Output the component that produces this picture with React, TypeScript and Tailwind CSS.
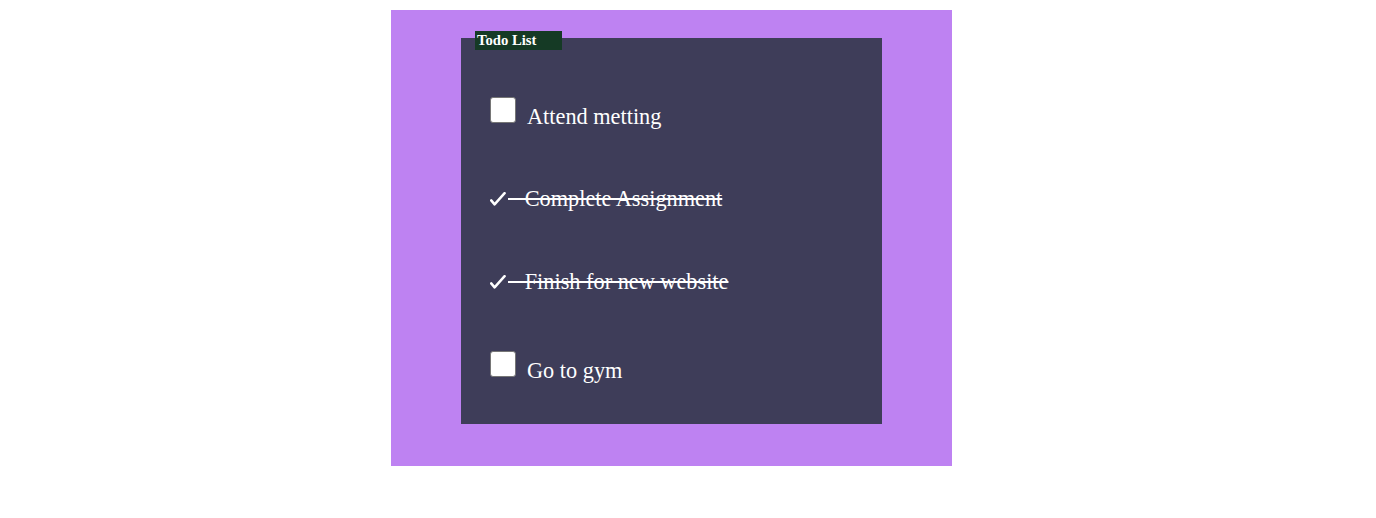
import * as React from "react";

interface TodoItem {
  title: string;
  done: boolean;
}

const todos: TodoItem[] = [
  { title: "Attend metting", done: false },
  { title: "Complete Assignment", done: true },
  { title: "Finish for new website", done: true },
  { title: "Go to gym", done: false },
];

const rowGap = ["mt-0", "mt-[57px]", "mt-[56px]", "mt-[56px]"];

const CheckMark = () => (
  <span className="w-[18px]">
    <svg width="16" height="14" viewBox="0 0 16 14" className="inline-block -translate-y-[3px]">
      <path
        d="M1.2 8.4 L4.6 12.4 L14.6 1.2"
        fill="none"
        stroke="white"
        strokeWidth="2.5"
        strokeLinecap="round"
        strokeLinejoin="round"
      />
    </svg>
  </span>
);

const TodoRow = ({ item, className }: { item: TodoItem; className: string }) => {
  return (
    <li className={`flex items-baseline ${className}`}>
      {item.done ? (
        <>
          <CheckMark />
          <span className="whitespace-pre text-[22.3px] leading-[25px] line-through">
            {"\u00a0\u00a0\u00a0" + item.title}
          </span>
        </>
      ) : (
        <>
          <span className="h-[26px] w-[26px] -translate-y-[1px] rounded-[3px] border border-[#767676] bg-white" />
          <span className="ml-[11px] text-[22.3px] leading-[25px]">{item.title}</span>
        </>
      )}
    </li>
  );
};

export default function App() {
  return (
    <div className="min-h-[518px] bg-white pt-[10px] font-['Liberation_Serif',serif] text-white">
      <div className="ml-[391px] w-[561px] bg-[#be82f2] pl-[70px] pr-[70px] pt-[28px] pb-[42px]">
        <div className="relative h-[386px] w-[421px] bg-[#3e3d59] pl-[29px] pt-[60px]">
          <div className="absolute left-[14px] top-[-7px] h-[19px] w-[87px] bg-[#153a25] pl-[2px] text-[14.7px] leading-[19px] font-bold">
            Todo List
          </div>
          <ul>
            {todos.map((item, i) => (
              <TodoRow key={i} item={item} className={rowGap[i]} />
            ))}
          </ul>
        </div>
      </div>
    </div>
  );
}
